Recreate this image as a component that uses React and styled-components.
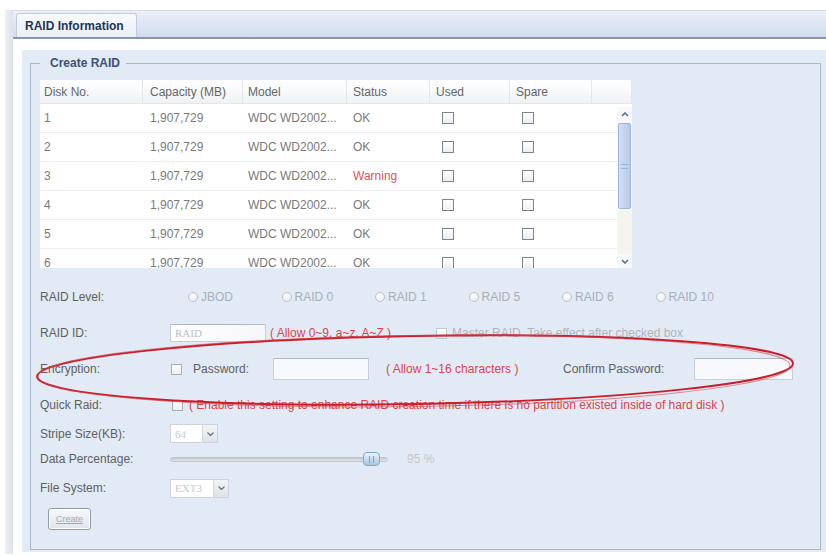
import React from "react";
import styled, { createGlobalStyle } from "styled-components";

const GlobalStyle = createGlobalStyle`
  html, body { margin: 0; padding: 0; background: #fff; }
  body {
    font-family: "Liberation Sans", Arial, sans-serif;
    font-size: 12px;
    color: #5c5c5c;
  }
  * { box-sizing: border-box; }
`;

const Page = styled.div`
  position: relative;
  width: 826px;
  height: 556px;
  padding-top: 10px;
  overflow: hidden;
`;

const Frame = styled.div`
  display: flex;
  margin-left: 5px;
  height: 544px;
`;

const SideBand = styled.div`
  width: 8px;
  background: linear-gradient(to right, #eef0f3, #dde2e8);
`;

const Panel = styled.div`
  flex: 1;
  display: flex;
  flex-direction: column;
`;

const TabStrip = styled.div`
  height: 29px;
  display: flex;
  align-items: flex-end;
  padding-left: 3px;
  background: linear-gradient(#eaf0f8, #d1dcee);
  border-top: 1px solid #d6dce5;
  border-bottom: 2px solid #8796a9;
`;

const Tab = styled.div`
  width: 121px;
  height: 24px;
  display: flex;
  align-items: center;
  padding-left: 8px;
  background: linear-gradient(#f8fafd, #eaf0f7);
  border: 1px solid #c2ccd8;
  border-bottom: none;
  border-radius: 3px 3px 0 0;
  font-weight: bold;
  font-size: 12px;
  color: #1d3456;
`;

const Body = styled.div`
  flex: 1;
  padding: 11px 0 0 9px;
  background: #fff;
`;

const LightArea = styled.div`
  background: #e2eaf5;
  padding: 6px 5px 2px 8px;
`;

const Fieldset = styled.fieldset`
  margin: 0;
  min-width: 0;
  border: 1px solid #a9b8ca;
  padding: 10px 10px 19px 9px;
`;

const Legend = styled.legend`
  padding: 0 6px 0 10px;
  font-weight: bold;
  font-size: 12px;
  line-height: 14px;
  color: #3b5273;
`;

/* ---- disk table ---- */

const Table = styled.div`
  width: 592px;
  background: #fff;
`;

const HeadRow = styled.div`
  display: flex;
  height: 24px;
  background: linear-gradient(#ffffff, #eff2f5);
  border-bottom: 1px solid #e4e7eb;
`;

const HeadCell = styled.div`
  width: ${(p) => p.$w}px;
  padding-left: ${(p) => p.$pad}px;
  display: flex;
  align-items: center;
  border-right: 1px solid #e3e6eb;
  color: #666;
`;

const BodyWrap = styled.div`
  display: flex;
  height: 164px;
  overflow: hidden;
`;

const Rows = styled.div`
  width: 577px;
  display: flex;
  flex-direction: column;
`;

const Row = styled.div`
  display: flex;
  flex-shrink: 0;
  height: 29px;
  border-bottom: 1px solid #eceef2;
`;

const Cell = styled.div`
  width: ${(p) => p.$w}px;
  padding-left: ${(p) => p.$pad}px;
  display: flex;
  align-items: center;
  color: ${(p) => (p.$warn ? "#e0525a" : "#7a7a7a")};
`;

const Box = styled.span`
  display: inline-block;
  flex-shrink: 0;
  width: ${(p) => p.$size}px;
  height: ${(p) => p.$size}px;
  border: 1px solid ${(p) => p.$border};
  background: linear-gradient(#ffffff, #eceff2);
`;

const Scrollbar = styled.div`
  width: 15px;
  margin-top: 3px;
  display: flex;
  flex-direction: column;
  background: #f6f8fb;
`;

const ScrollArrow = styled.div`
  height: 14px;
  display: flex;
  align-items: center;
  justify-content: center;
`;

const Thumb = styled.div`
  height: 86px;
  margin: 2px 1px;
  display: flex;
  align-items: center;
  justify-content: center;
  background: linear-gradient(to right, #d2def3, #b7caea);
  border: 1px solid #9fb5dc;
  border-radius: 2px;
`;

const Grip = styled.div`
  width: 7px;
  height: 5px;
  border-top: 1px solid #9db2d6;
  border-bottom: 1px solid #9db2d6;
`;

const Track = styled.div`
  flex: 1;
  background: #f4f5ee;
`;

/* ---- form ---- */

const Form = styled.div`
  margin-top: 11px;
  display: flex;
  flex-direction: column;
`;

const FormRow = styled.div`
  display: flex;
  align-items: center;
  height: ${(p) => p.$h}px;
`;

const Label = styled.div`
  width: 130px;
  flex-shrink: 0;
  color: #5f5f5f;
`;

const RadioGroup = styled.div`
  display: flex;
  padding-left: 18px;
`;

const RadioItem = styled.div`
  width: 93.5px;
  display: flex;
  align-items: center;
  gap: 3px;
  color: #a9afb7;
`;

const RadioDot = styled.span`
  width: 10px;
  height: 10px;
  border-radius: 50%;
  border: 1px solid #bcc3cb;
  background: radial-gradient(circle at 40% 35%, #ffffff, #e3e8ee);
`;

const TextInput = styled.div`
  width: ${(p) => p.$w}px;
  height: ${(p) => p.$h}px;
  flex-shrink: 0;
  display: flex;
  align-items: center;
  padding-left: 4px;
  background: ${(p) => (p.$faded ? "linear-gradient(to right, #fff, #f5f7fa)" : "#f7f9fc")};
  border: 1px solid #c6ced8;
  border-top-color: #aeb8c4;
  color: #b9bec4;
  font-family: "Liberation Serif", "Times New Roman", serif;
  font-size: 11px;
`;

const Hint = styled.div`
  width: ${(p) => p.$w}px;
  flex-shrink: 0;
  margin-left: ${(p) => p.$ml || 0}px;
  color: ${(p) => (p.$muted ? "#b1b5ba" : "#d9444c")};
  white-space: nowrap;
`;

const Inline = styled.div`
  display: flex;
  align-items: center;
  margin-left: ${(p) => p.$ml || 0}px;
`;

const Select = styled.div`
  display: flex;
  height: 19px;
  border: 1px solid #ccd3dc;
  background: #f4f6f9;
`;

const SelectValue = styled.div`
  width: ${(p) => p.$w}px;
  display: flex;
  align-items: center;
  padding-left: 4px;
  background: #fff;
  color: #c6cacf;
  font-family: "Liberation Serif", "Times New Roman", serif;
  font-size: 11px;
`;

const SelectArrow = styled.div`
  width: 15px;
  display: flex;
  align-items: center;
  justify-content: center;
  background: linear-gradient(#f2f4f7, #dfe3e8);
  border-left: 1px solid #d3d8df;
`;

const SliderWrap = styled.div`
  position: relative;
  width: 218px;
  height: 16px;
  display: flex;
  align-items: center;
`;

const SliderTrack = styled.div`
  width: 100%;
  height: 5px;
  border-radius: 3px;
  background: linear-gradient(#c4c9cf, #e2e5e9);
  border: 1px solid #c0c5cb;
`;

const SliderThumb = styled.div`
  position: absolute;
  left: 193px;
  top: 1px;
  width: 17px;
  height: 14px;
  border-radius: 4px;
  border: 1px solid #86a8cb;
  background: linear-gradient(#eaf3fb, #a9c6e3);
  display: flex;
  align-items: center;
  justify-content: center;
  &::after {
    content: "";
    width: 3px;
    height: 7px;
    border-left: 1px solid #7c9bbd;
    border-right: 1px solid #7c9bbd;
  }
`;

const Percent = styled.div`
  margin-left: 19px;
  color: #c2c6cb;
`;

const CreateButton = styled.button`
  margin: 6px 0 0 8px;
  width: 43px;
  height: 22px;
  padding: 0;
  border: 1px solid #8f9bab;
  border-radius: 3px;
  background: linear-gradient(#f7f9fb, #dfe5ec);
  font-family: "Liberation Sans", Arial, sans-serif;
  font-size: 9px;
  color: #a3aab3;
  text-decoration: underline;
  box-shadow: inset 0 0 0 1px #ffffff;
`;

const Annotation = styled.svg`
  position: absolute;
  left: 0;
  top: 0;
  pointer-events: none;
`;

const columns = [
  { w: 103, pad: 4, title: "Disk No." },
  { w: 100, pad: 7, title: "Capacity (MB)" },
  { w: 104, pad: 5, title: "Model" },
  { w: 83, pad: 6, title: "Status" },
  { w: 80, pad: 6, title: "Used" },
  { w: 82, pad: 6, title: "Spare" },
  { w: 40, pad: 0, title: "" },
];

const disks = [
  { no: "1", status: "OK" },
  { no: "2", status: "OK" },
  { no: "3", status: "Warning" },
  { no: "4", status: "OK" },
  { no: "5", status: "OK" },
  { no: "6", status: "OK" },
];

const levels = ["JBOD", "RAID 0", "RAID 1", "RAID 5", "RAID 6", "RAID 10"];

const Chevron = ({ up }) => (
  <svg width="8" height="5" viewBox="0 0 8 5">
    <path
      d={up ? "M1 4 L4 1 L7 4" : "M1 1 L4 4 L7 1"}
      fill="none"
      stroke="#4d6a99"
      strokeWidth="1.5"
    />
  </svg>
);

const SmallChevron = () => (
  <svg width="7" height="4" viewBox="0 0 7 4">
    <path d="M0.5 0.5 L3.5 3.5 L6.5 0.5" fill="none" stroke="#6d7784" strokeWidth="1.3" />
  </svg>
);

const App = () => {
  return (
    <Page>
      <GlobalStyle />
      <Frame>
        <SideBand />
        <Panel>
          <TabStrip>
            <Tab>RAID Information</Tab>
          </TabStrip>
          <Body>
            <LightArea>
              <Fieldset>
                <Legend>Create RAID</Legend>

                <Table>
                  <HeadRow>
                    {columns.map((c, i) => (
                      <HeadCell key={i} $w={c.w} $pad={c.pad}>
                        {c.title}
                      </HeadCell>
                    ))}
                  </HeadRow>
                  <BodyWrap>
                    <Rows>
                      {disks.map((d) => (
                        <Row key={d.no}>
                          <Cell $w={103} $pad={4}>{d.no}</Cell>
                          <Cell $w={100} $pad={7}>1,907,729</Cell>
                          <Cell $w={104} $pad={5}>WDC WD2002...</Cell>
                          <Cell $w={83} $pad={6} $warn={d.status === "Warning"}>
                            {d.status}
                          </Cell>
                          <Cell $w={80} $pad={12}>
                            <Box $size={12} $border="#7f858d" />
                          </Cell>
                          <Cell $w={82} $pad={12}>
                            <Box $size={12} $border="#7f858d" />
                          </Cell>
                        </Row>
                      ))}
                    </Rows>
                    <Scrollbar>
                      <ScrollArrow>
                        <Chevron up />
                      </ScrollArrow>
                      <Thumb>
                        <Grip />
                      </Thumb>
                      <Track />
                      <ScrollArrow>
                        <Chevron />
                      </ScrollArrow>
                    </Scrollbar>
                  </BodyWrap>
                </Table>

                <Form>
                  <FormRow $h={36}>
                    <Label>RAID Level:</Label>
                    <RadioGroup>
                      {levels.map((l) => (
                        <RadioItem key={l}>
                          <RadioDot />
                          {l}
                        </RadioItem>
                      ))}
                    </RadioGroup>
                  </FormRow>

                  <FormRow $h={36}>
                    <Label>RAID ID:</Label>
                    <TextInput $w={96} $h={18} $faded>
                      RAID
                    </TextInput>
                    <Hint $w={166} $ml={4}>( Allow 0~9, a~z, A~Z )</Hint>
                    <Inline>
                      <Box $size={11} $border="#c3c9d0" />
                      <Hint $w={260} $ml={5} $muted>
                        Master RAID&nbsp; Take effect after checked box
                      </Hint>
                    </Inline>
                  </FormRow>

                  <FormRow $h={36}>
                    <Label>Encryption:</Label>
                    <Inline $ml={1}>
                      <Box $size={11} $border="#a7aeb7" />
                    </Inline>
                    <Hint $w={80} $ml={11} style={{ color: "#5f5f5f" }}>
                      Password:
                    </Hint>
                    <TextInput $w={96} $h={22} />
                    <Hint $w={177} $ml={17}>( Allow 1~16 characters )</Hint>
                    <Hint $w={131} style={{ color: "#5f5f5f" }}>
                      Confirm Password:
                    </Hint>
                    <TextInput $w={99} $h={22} />
                  </FormRow>

                  <FormRow $h={36}>
                    <Label>Quick Raid:</Label>
                    <Inline $ml={2}>
                      <Box $size={11} $border="#a7aeb7" />
                    </Inline>
                    <Hint $w={590} $ml={6}>
                      ( Enable this setting to enhance RAID creation time if there is no
                      partition existed inside of hard disk )
                    </Hint>
                  </FormRow>

                  <FormRow $h={21}>
                    <Label>Stripe Size(KB):</Label>
                    <Select>
                      <SelectValue $w={31}>64</SelectValue>
                      <SelectArrow>
                        <SmallChevron />
                      </SelectArrow>
                    </Select>
                  </FormRow>

                  <FormRow $h={30}>
                    <Label>Data Percentage:</Label>
                    <SliderWrap>
                      <SliderTrack />
                      <SliderThumb />
                    </SliderWrap>
                    <Percent>95 %</Percent>
                  </FormRow>

                  <FormRow $h={28}>
                    <Label>File System:</Label>
                    <Select>
                      <SelectValue $w={42}>EXT3</SelectValue>
                      <SelectArrow>
                        <SmallChevron />
                      </SelectArrow>
                    </Select>
                  </FormRow>

                  <div>
                    <CreateButton>Create</CreateButton>
                  </div>
                </Form>
              </Fieldset>
            </LightArea>
          </Body>
        </Panel>
      </Frame>

      <Annotation width="826" height="556" viewBox="0 0 826 556">
        <ellipse
          cx="415"
          cy="370"
          rx="378"
          ry="34"
          transform="rotate(-1 415 370)"
          fill="none"
          stroke="#c61f2c"
          strokeWidth="2"
        />
        <ellipse
          cx="414"
          cy="371"
          rx="376"
          ry="35.5"
          transform="rotate(-0.8 414 371)"
          fill="none"
          stroke="#d8434c"
          strokeWidth="1"
          opacity="0.6"
        />
      </Annotation>
    </Page>
  );
};

export default App;
